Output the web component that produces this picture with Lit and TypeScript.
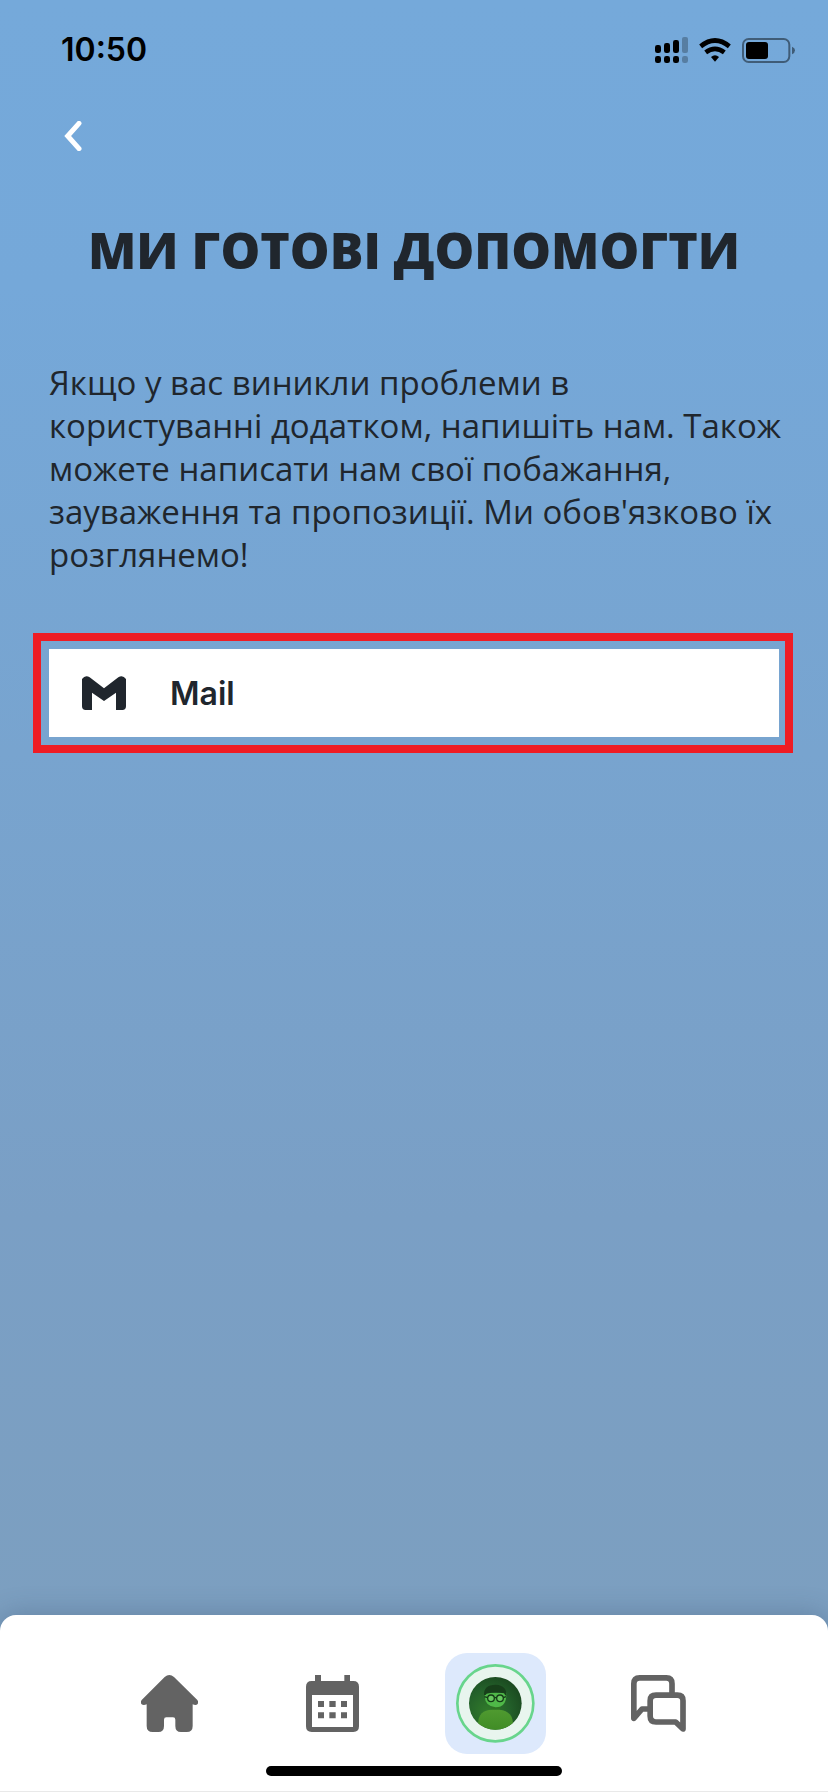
import { LitElement, html, css, svg } from "lit";
import { customElement } from "lit/decorators.js";

const homeIcon = svg`<path d="M71 6Q85 -6 99 6L169 75Q173 80 170 87Q165 93 155 88V153Q155 171 137 171H120Q103 171 103 153V134Q103 127 96 127H76Q69 127 69 134V153Q69 171 52 171H35Q17 171 17 153V88Q7 93 1 87Q-2 80 2 75Z"/>`;
const calendarIcon = svg`<path fill-rule="evenodd" d="M27 0H45V18H115V0H132V18H142Q159 18 159 35V154Q159 171 142 171H17Q0 171 0 154V35Q0 18 17 18H27ZM18 60V156H141V60ZM36 78H54V96H36ZM70 78H89V96H70ZM105 78H123V96H105ZM36 112H54V130H36ZM70 112H89V130H70ZM105 112H123V130H105Z"/>`;
const chatIcon = svg`<g fill="none" stroke="currentColor" stroke-width="17" stroke-linejoin="round" stroke-linecap="round"><path stroke-linecap="butt" d="M123 56V26Q123 8.500 106 8.500H26Q8.500 8.500 8.500 26V130L33 102H54"/><path d="M75 60.500H139Q156 60.500 156 77V162L134 141H75Q57.500 141 57.500 123V77Q57.500 60.500 75 60.500Z"/></g>`;

@customElement("app-root")
export class AppRoot extends LitElement {
  static styles = css`
    :host {
      display: flex;
      flex-direction: column;
      min-height: 100vh;
      box-sizing: border-box;
      background: linear-gradient(#75a9da 0, #75a8d9 16%, #78a4cf 42%, #7a9fc5 68%, #7c9fc0 90%);
      color: #20262d;
      font-family: Inter, "Liberation Sans", sans-serif;
    }
    .status {
      display: flex;
      align-items: center;
      justify-content: space-between;
      height: 100px;
      padding: 0 33px 0 61px;
      color: #000;
    }
    .time {
      font-size: 32px;
      line-height: 40px;
      font-weight: 600;
    }
    .indicators {
      display: flex;
      align-items: center;
      gap: 11px;
    }
    svg {
      display: block;
      fill: currentColor;
    }
    .back {
      display: flex;
      align-items: center;
      justify-content: center;
      align-self: flex-start;
      width: 48px;
      height: 72px;
      margin-left: 49px;
      padding: 0;
      border: 0;
      background: none;
      color: #fff;
    }
    h1 {
      margin: 48px 24px 0;
      font-family: "Open Sans", "Noto Sans", sans-serif;
      font-size: 50px;
      line-height: 60px;
      font-weight: 800;
      text-align: center;
      text-transform: uppercase;
    }
    .intro {
      margin: 81px 42px 0 49px;
      font-family: "Open Sans", "Noto Sans", sans-serif;
      font-size: 33px;
      line-height: 43px;
    }
    .highlight {
      margin: 57px 35px 0 33px;
      padding: 8px 6px 8px 8px;
      border: 8px solid #ee1c24;
    }
    .mail {
      display: flex;
      align-items: center;
      gap: 44px;
      height: 88px;
      padding: 0 33px;
      background: #fff;
      color: #20262d;
      font-size: 32px;
      font-weight: 600;
      text-decoration: none;
    }
    .dock {
      display: flex;
      flex-direction: column;
      align-items: center;
      gap: 12px;
      margin-top: auto;
      padding: 38px 0 15px;
      border-bottom: 1px solid #e9e9e9;
      border-radius: 16px 16px 0 0;
      background: #fff;
      box-shadow: 0 0 28px rgba(40, 60, 90, 0.3);
    }
    .tabs {
      display: grid;
      grid-template-columns: repeat(4, 1fr);
      align-self: stretch;
      padding: 0 88px;
    }
    .tab {
      display: flex;
      align-items: center;
      justify-content: center;
      width: 101px;
      height: 101px;
      justify-self: center;
      border-radius: 22px;
      color: #636363;
    }
    .active {
      background: #dde9fc;
    }
    .handle {
      width: 296px;
      height: 10px;
      border-radius: 5px;
      background: #000;
    }
  `;

  render() {
    return html`
      <div class="status">
        <span class="time">10:50</span>
        <div class="indicators">
          <svg width="33" height="26" viewBox="0 0 99 78" role="img" aria-label="Signal">
            <rect y="24" width="18" height="24" rx="7" /><rect x="27" y="18" width="18" height="30" rx="7" /><rect x="54" y="9" width="18" height="39" rx="7" />
            <rect y="57" width="18" height="21" rx="7" /><rect x="27" y="57" width="18" height="21" rx="7" /><rect x="54" y="57" width="18" height="21" rx="7" />
            <g opacity=".25"><rect x="81" width="18" height="48" rx="6" /><rect x="81" y="57" width="18" height="21" rx="7" /></g>
          </svg>
          <svg width="32" height="24" viewBox="0 0 96 72" role="img" aria-label="Wi-Fi">
            <path d="M36 57Q48 47 60 57L48 71Z" />
            <g fill="none" stroke="currentColor" stroke-width="14"><path d="M5 25Q48 -10 91 25" /><path d="M20 43Q48 22 76 43" /></g>
          </svg>
          <svg width="53" height="25" viewBox="0 0 159 75" role="img" aria-label="Battery">
            <g opacity=".45"><rect x="3" y="3" width="139" height="69" rx="17" fill="none" stroke="currentColor" stroke-width="6" /><path d="M150 26Q159 30 159 37Q159 45 150 49Z" /></g>
            <rect x="12" y="12" width="66" height="51" rx="9" />
          </svg>
        </div>
      </div>
      <button class="back" aria-label="Назад">
        <svg width="18" height="30" viewBox="0 0 54 90"><path d="M45 7L11 45L45 83" fill="none" stroke="currentColor" stroke-width="15" stroke-linecap="round" /></svg>
      </button>
      <h1>Ми готові допомогти</h1>
      <p class="intro">
        Якщо у вас виникли проблеми в користуванні додатком, напишіть нам. Також можете написати нам свої побажання, зауваження та пропозиції. Ми обов'язково їх розглянемо!
      </p>
      <div class="highlight">
        <a class="mail" href="mailto:">
          <svg width="44" height="34" viewBox="0 0 132 102"><path d="M0 9Q10 -5 23 4L66 37L109 4Q122 -5 132 9V91Q132 102 121 102H102V50L66 75L30 50V102H11Q0 102 0 91Z" /></svg>
          <span>Mail</span>
        </a>
      </div>
      <nav class="dock">
        <div class="tabs">
          <a class="tab" href="#home" aria-label="Головна"><svg width="57" height="57" viewBox="0 0 171 171">${homeIcon}</svg></a>
          <a class="tab" href="#calendar" aria-label="Календар"><svg width="53" height="57" viewBox="0 0 159 171">${calendarIcon}</svg></a>
          <a class="tab active" href="#profile" aria-label="Профіль" aria-current="page">
            <svg width="79" height="79" viewBox="0 0 237 237">
              <defs>
                <radialGradient id="disc" cx=".35" cy=".65" r=".7"><stop offset="0" stop-color="#317b2a" /><stop offset=".6" stop-color="#23602a" /><stop offset="1" stop-color="#1b4a20" /></radialGradient>
                <linearGradient id="shirt" x2="0" y2="1"><stop stop-color="#4f9a30" /><stop offset="1" stop-color="#408c25" /></linearGradient>
                <clipPath id="round"><circle cx="118" cy="118" r="79" /></clipPath>
              </defs>
              <circle cx="118" cy="118" r="114" fill="#e8f5ee" stroke="#68d58c" stroke-width="8" />
              <g clip-path="url(#round)">
                <rect x="38" y="38" width="160" height="160" fill="url(#disc)" />
                <path d="M106 120H132V140H106Z" fill="#2f7423" />
                <path d="M66 200V178Q68 138 108 137H130Q169 140 171 178V200Z" fill="url(#shirt)" />
                <path d="M86 86H151Q153 129 119 130Q87 127 86 96Z" fill="#4fb848" />
                <path d="M84 94Q82 62 119 62Q154 64 151 97Q146 92 144 88Q118 83 92 89Q90 94 84 94Z" fill="#173f1a" />
                <g fill="#67c85e" stroke="#153c17" stroke-width="4"><circle cx="105" cy="103" r="10" /><circle cx="132" cy="103" r="10" /><path d="M115 101H122M85 98L95 101M142 101L150 98" /></g>
              </g>
            </svg>
          </a>
          <a class="tab" href="#chat" aria-label="Чат"><svg width="55" height="57" viewBox="0 0 165 171">${chatIcon}</svg></a>
        </div>
        <div class="handle"></div>
      </nav>
    `;
  }
}
